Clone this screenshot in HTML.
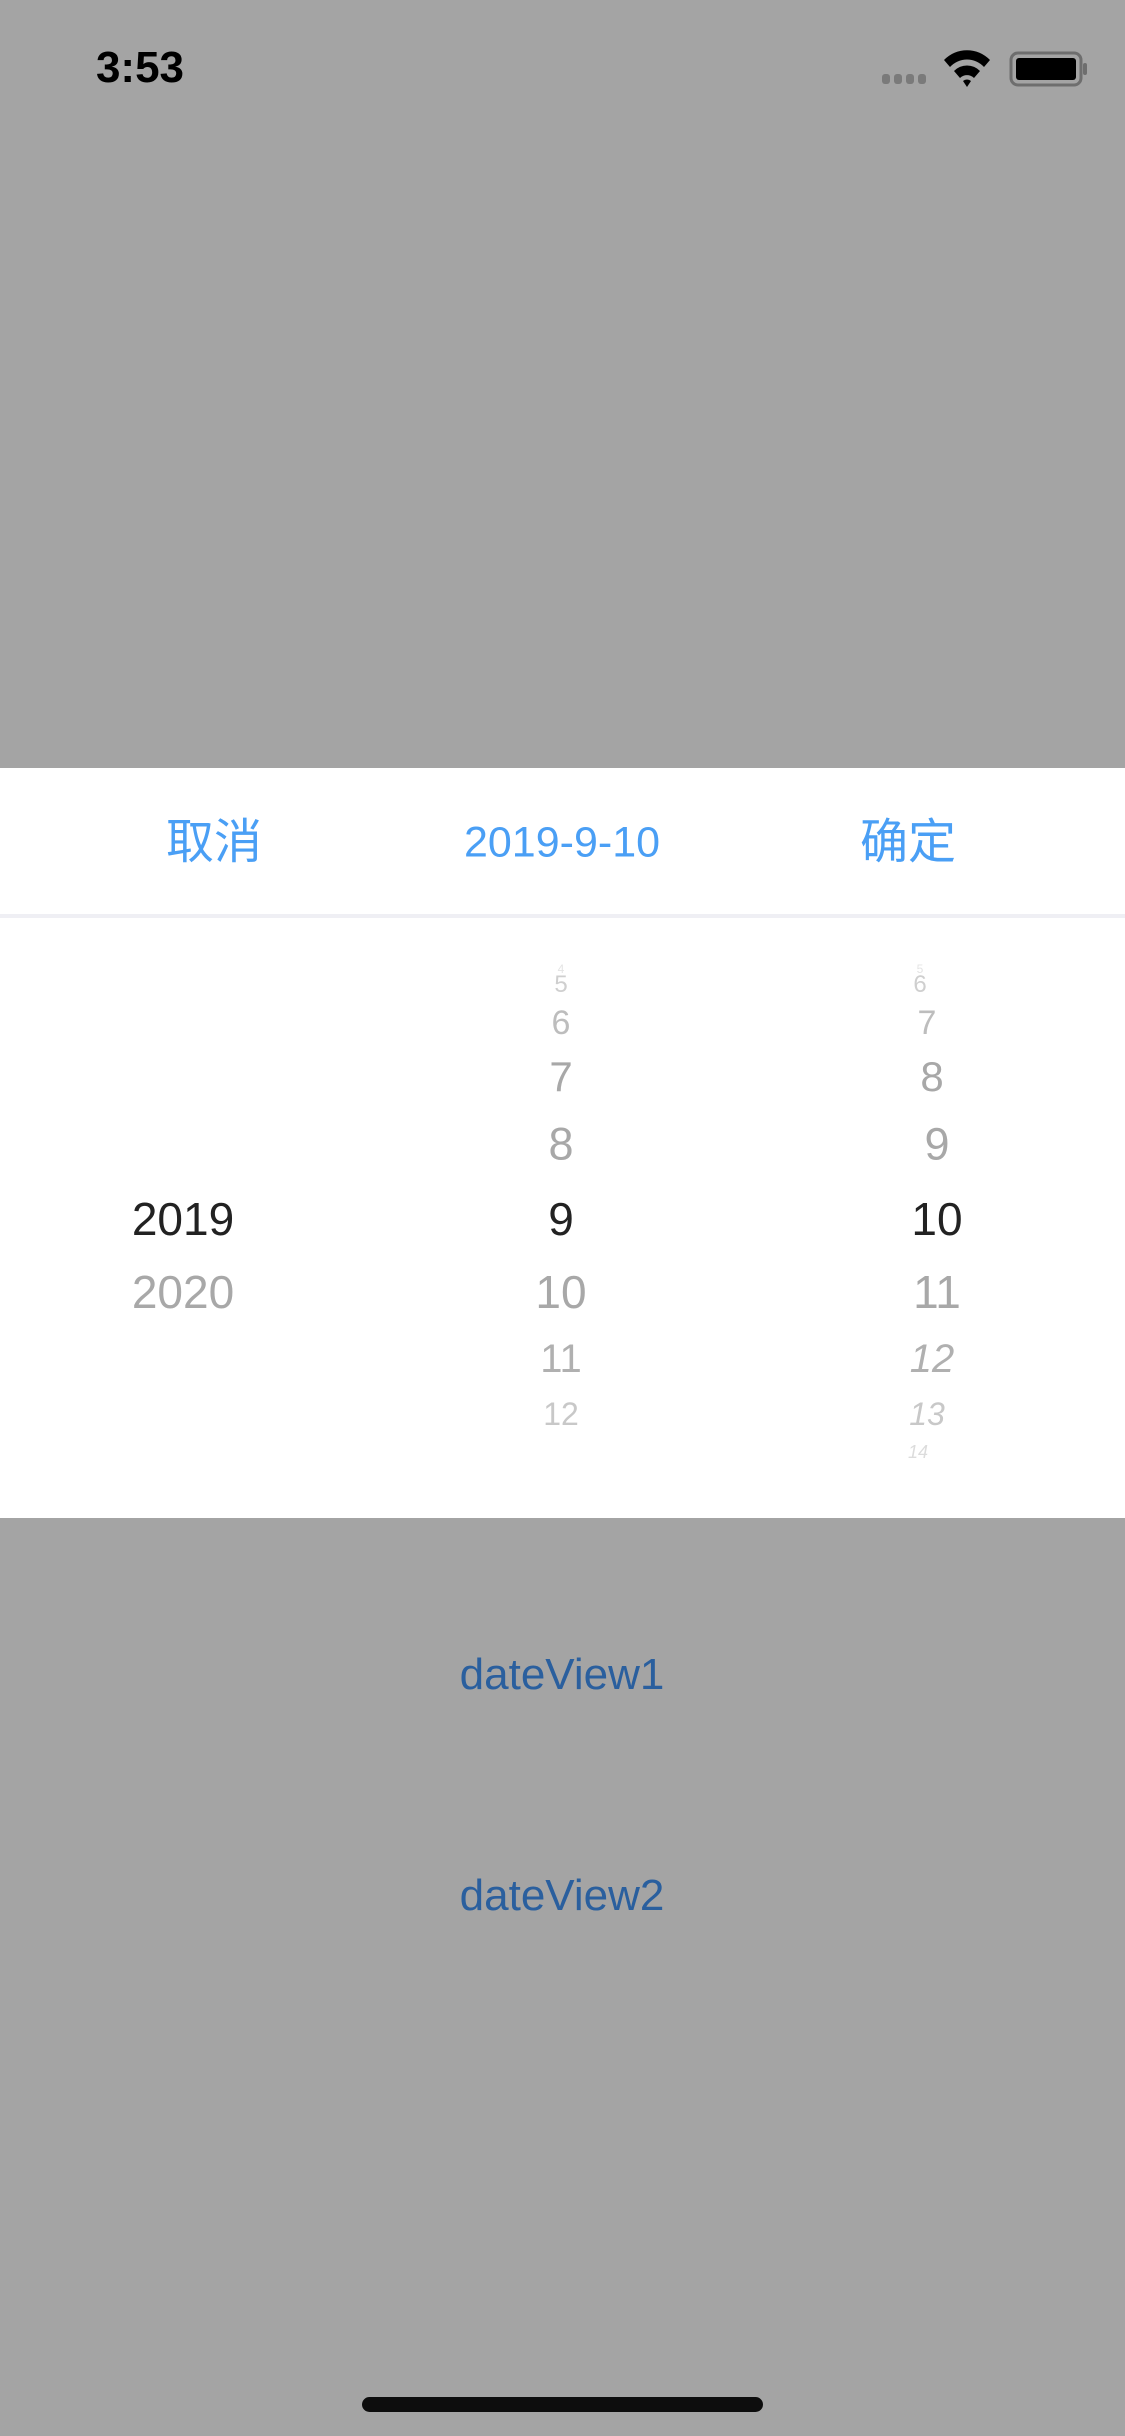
<!DOCTYPE html>
<html><head><meta charset="utf-8"><style>
body{margin:0;width:1125px;height:2436px;background:#a4a4a4;position:relative;overflow:hidden;font-family:"Liberation Sans","Noto Sans CJK SC",sans-serif}
.a{position:absolute;white-space:nowrap;transform:translate(-50%,-50%);line-height:1}
</style></head><body>
<div class="a" style="left:140px;top:68px;font-size:44px;font-weight:bold;color:#000">3:53</div>
<svg style="position:absolute;left:880px;top:50px" width="210" height="40" viewBox="0 0 210 40">
<g fill="#7a7a7a"><rect x="2" y="24" width="8" height="10" rx="3"/><rect x="14" y="24" width="8" height="10" rx="3"/><rect x="26" y="24" width="8" height="10" rx="3"/><rect x="38" y="24" width="8" height="10" rx="3"/></g>
<path d="M64 10 A32 32 0 0 1 110 10 L104 17 A23 23 0 0 0 70 17Z" fill="#000"/>
<path d="M74 21 A18 18 0 0 1 100 21 L94 28 A10 10 0 0 0 80 28Z" fill="#000"/>
<path d="M83 31 A6 6 0 0 1 91 31 L87 37Z" fill="#000"/>
<rect x="131" y="3" width="70" height="32" rx="7" fill="none" stroke="#6e6e6e" stroke-width="3"/>
<rect x="136" y="8" width="60" height="22" rx="3" fill="#000"/>
<rect x="203" y="13" width="4" height="12" rx="2" fill="#6e6e6e"/>
</svg>
<div style="position:absolute;left:0;top:768px;width:1125px;height:750px;background:#fff"></div>
<div style="position:absolute;left:0;top:914px;width:1125px;height:4px;background:#efeff4"></div>
<div class="a" style="left:214px;top:843px;font-size:48px;color:#4a9ff5">取消</div>
<div class="a" style="left:562px;top:843px;font-size:43px;color:#4a9ff5">2019-9-10</div>
<div class="a" style="left:908px;top:843px;font-size:48px;color:#4a9ff5">确定</div>
<div class="a" style="left:183px;top:1219px;font-size:46px;color:#222">2019</div>
<div class="a" style="left:183px;top:1292px;font-size:46px;color:#a8a8a8">2020</div>
<div class="a" style="left:561px;top:969px;font-size:12px;color:#e4e4e4">4</div>
<div class="a" style="left:561px;top:985px;font-size:24px;color:#cfcfcf">5</div>
<div class="a" style="left:561px;top:1023px;font-size:34px;color:#bdbdbd">6</div>
<div class="a" style="left:561px;top:1077px;font-size:42px;color:#a8a8a8">7</div>
<div class="a" style="left:561px;top:1144px;font-size:45px;color:#a8a8a8">8</div>
<div class="a" style="left:561px;top:1219px;font-size:46px;color:#222">9</div>
<div class="a" style="left:561px;top:1292px;font-size:46px;color:#a8a8a8">10</div>
<div class="a" style="left:561px;top:1359px;font-size:40px;color:#b0b0b0">11</div>
<div class="a" style="left:561px;top:1414px;font-size:32px;color:#c8c8c8">12</div>
<div class="a" style="left:920px;top:969px;font-size:12px;color:#e4e4e4">5</div>
<div class="a" style="left:920px;top:985px;font-size:24px;color:#cfcfcf">6</div>
<div class="a" style="left:927px;top:1023px;font-size:34px;color:#bdbdbd">7</div>
<div class="a" style="left:932px;top:1077px;font-size:42px;color:#a8a8a8">8</div>
<div class="a" style="left:937px;top:1144px;font-size:45px;color:#a8a8a8">9</div>
<div class="a" style="left:937px;top:1219px;font-size:46px;color:#222">10</div>
<div class="a" style="left:937px;top:1292px;font-size:46px;color:#a8a8a8">11</div>
<div class="a" style="left:932px;top:1359px;font-size:40px;color:#b0b0b0;font-style:italic">12</div>
<div class="a" style="left:927px;top:1414px;font-size:32px;color:#c8c8c8;font-style:italic">13</div>
<div class="a" style="left:918px;top:1452px;font-size:18px;color:#dcdcdc;font-style:italic">14</div>
<div class="a" style="left:562px;top:1675px;font-size:44px;color:#2a5f9e">dateView1</div>
<div class="a" style="left:562px;top:1896px;font-size:44px;color:#2a5f9e">dateView2</div>
<div style="position:absolute;left:362px;top:2397px;width:401px;height:15px;border-radius:8px;background:#0d0d0d"></div>
</body></html>
